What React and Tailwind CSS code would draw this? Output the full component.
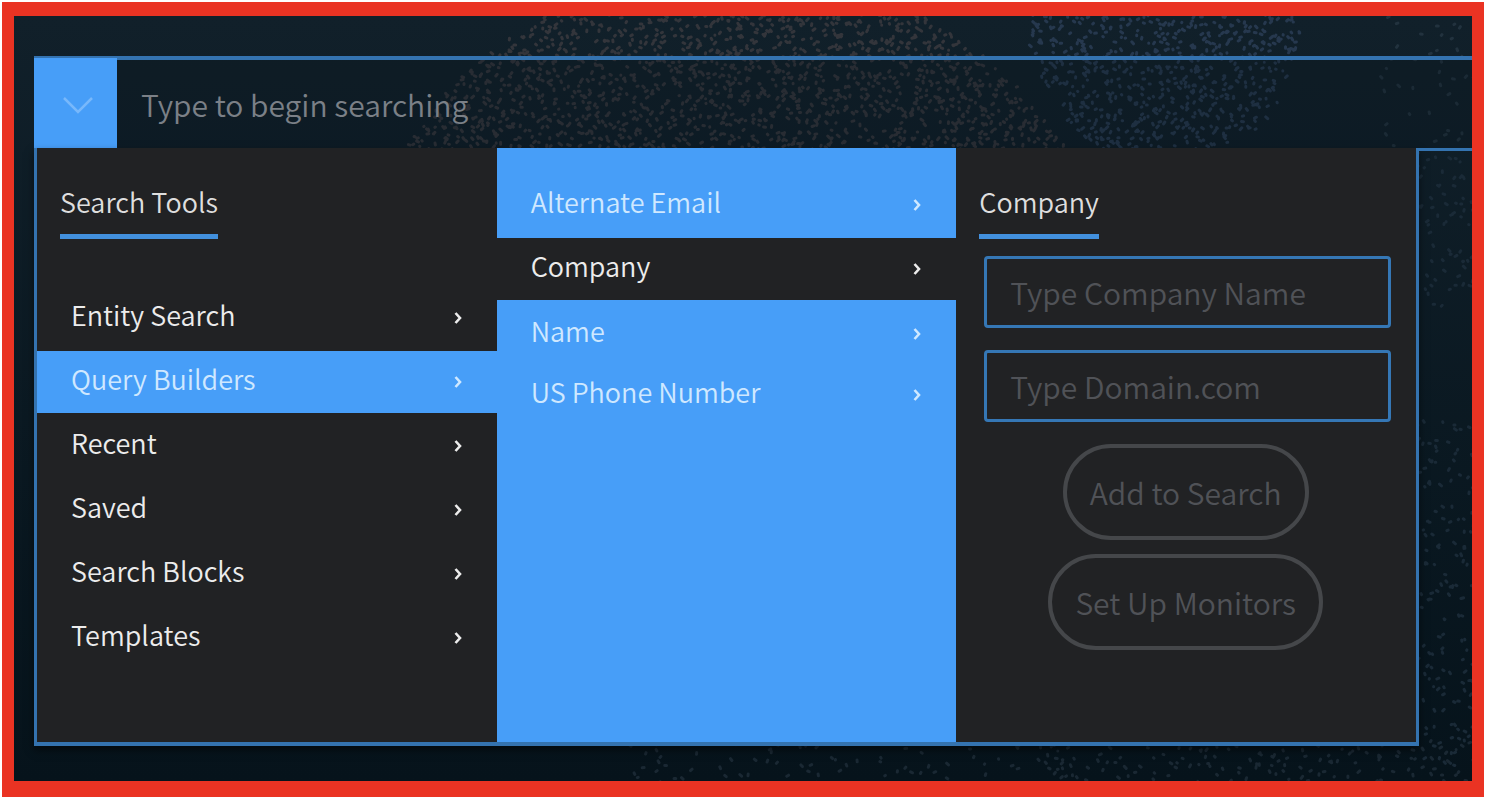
const searchTools = ["Entity Search", "Query Builders", "Recent", "Saved", "Search Blocks", "Templates"];

const queryBuilders = [
  { label: "Alternate Email", className: "h-[90px] pt-6 text-[#cfe8ff]" },
  { label: "Company", className: "h-[62px] bg-[#212224] text-[#ececec]" },
  { label: "Name", className: "h-16 pt-1 text-[#cfe8ff]" },
  { label: "US Phone Number", className: "h-[62px] text-[#cfe8ff]" },
];

function createRandom(seed) {
  let state = seed;
  return () => {
    state = (state * 1664525 + 1013904223) % 4294967296;
    return state / 4294967296;
  };
}

// Short rounded strokes scattered on a jittered grid, kept where inside() allows.
function scatter({ seed, x, y, w, h, step, density, inside }) {
  const random = createRandom(seed);
  let path = "";
  for (let row = y; row < y + h; row += step) {
    for (let col = x; col < x + w; col += step) {
      const px = col + (random() - 0.5) * step * 1.8;
      const py = row + (random() - 0.5) * step * 1.8;
      const dx = (random() - 0.5) * 4;
      const dy = (random() - 0.5) * 4;
      if (random() < density && inside(px, py)) {
        path += `M${px.toFixed(1)} ${py.toFixed(1)}l${dx.toFixed(1)} ${dy.toFixed(1)}`;
      }
    }
  }
  return path;
}

const circle = (cx, cy, r) => (x, y) => Math.hypot(x - cx, y - cy) < r;
const everywhere = () => true;

const warmDots = scatter({ seed: 7, x: 370, y: 0, w: 700, h: 140, step: 6, density: 0.72, inside: circle(721, 342, 391) });
const coolDots = scatter({ seed: 21, x: 1000, y: 0, w: 300, h: 140, step: 6, density: 0.72, inside: circle(1151, 14, 135) });
const sparseDots = scatter({ seed: 33, x: 1366, y: 0, w: 400, h: 130, step: 12, density: 0.5, inside: everywhere });
const sideDots =
  scatter({ seed: 45, x: 1408, y: 140, w: 360, h: 150, step: 9, density: 0.6, inside: everywhere }) +
  scatter({ seed: 46, x: 1408, y: 410, w: 360, h: 340, step: 9, density: 0.6, inside: everywhere });
const bottomDots =
  scatter({ seed: 57, x: 620, y: 730, w: 440, h: 40, step: 10, density: 0.4, inside: everywhere }) +
  scatter({ seed: 58, x: 1030, y: 730, w: 740, h: 40, step: 8, density: 0.6, inside: everywhere });

function Backdrop() {
  return (
    <svg
      aria-hidden="true"
      className="absolute inset-0 h-full w-full"
      viewBox="0 0 1458 765"
      preserveAspectRatio="xMinYMin slice"
      fill="none"
      strokeWidth="3"
      strokeLinecap="round"
    >
      <path d={warmDots} stroke="#33353b" />
      <path d={coolDots} stroke="#26384e" />
      <path d={sparseDots} stroke="#22323e" />
      <path d={sideDots} stroke="#1a2a37" />
      <path d={bottomDots} stroke="#1a2833" />
    </svg>
  );
}

function RightArrow() {
  return (
    <svg aria-hidden="true" className="h-3.5 w-2.5" viewBox="0 0 10 14" fill="none" stroke="currentColor" strokeWidth="2.6">
      <path d="M2.5 2 7 7 2.5 12" />
    </svg>
  );
}

function Heading({ children }) {
  return (
    <h2 className="w-fit border-b-5 border-[#4290dd] pb-3.5 text-[27px] leading-9 text-[#dedede]">{children}</h2>
  );
}

function MenuItem({ label, className }) {
  return (
    <li>
      <button type="button" className={`flex w-full items-center justify-between px-[34px] text-left text-[27px] leading-9 ${className}`}>
        <span className="pb-1.5">{label}</span>
        <RightArrow />
      </button>
    </li>
  );
}

function Field({ label }) {
  return (
    <input
      type="text"
      aria-label={label}
      placeholder={label}
      className="h-[72px] w-full rounded-sm border-3 border-[#3577b5] bg-transparent px-[23px] text-[30px] text-[#d9d9d9] outline-none placeholder:text-[#505257]"
    />
  );
}

function PillButton({ children }) {
  return (
    <button type="button" className="h-24 rounded-full border-4 border-[#45474a] px-[23px] text-[30px] text-[#505257]">
      {children}
    </button>
  );
}

export default function App() {
  return (
    <div className="bg-white px-0.5 pt-0.5 pb-[7px] font-['Noto_Sans_CJK_SC','Noto_Sans',sans-serif] font-[350]">
      <main className="relative overflow-hidden border-x-12 border-t-14 border-b-16 border-[#ea3323] bg-linear-to-b from-[#11202a] to-[#06131b] pt-10 pb-[35px] pl-5">
        <Backdrop />
        <div className="relative">
          <form className="flex h-23 border-t-4 border-[#3473b0] bg-[#06131d]/25">
            <button type="button" aria-label="Toggle search tools" className="-mt-0.5 flex w-[83px] items-center justify-center bg-[#479ef8] pt-1 pl-1">
              <svg aria-hidden="true" className="h-5 w-8" viewBox="0 0 32 20" fill="none" stroke="#78b8fb" strokeWidth="2.5">
                <path d="M2 3 16 17 30 3" />
              </svg>
            </button>
            <input
              type="search"
              aria-label="Search"
              placeholder="Type to begin searching"
              className="min-w-0 flex-1 bg-transparent px-6 text-[30px] text-[#d9d9d9] outline-none placeholder:text-[#7b8087]"
            />
          </form>
          <div className="flex">
            <div className="grid min-h-[598px] flex-1 grid-cols-3 border-x-3 border-b-4 border-[#3473b0] bg-[#212224] shadow-[0_4px_8px_#00000080]">
              <section className="pt-9">
                <div className="pl-[23px]">
                  <Heading>Search Tools</Heading>
                </div>
                <ul className="mt-12 grid gap-0.5">
                  {searchTools.map((label) => (
                    <MenuItem
                      key={label}
                      label={label}
                      className={label === "Query Builders" ? "h-[62px] bg-[#479ef8] text-[#cfe8ff]" : "h-[62px] text-[#ececec]"}
                    />
                  ))}
                </ul>
              </section>
              <ul className="bg-[#479ef8]">
                {queryBuilders.map((item) => (
                  <MenuItem key={item.label} label={item.label} className={item.className} />
                ))}
              </ul>
              <section className="pt-9 pr-[25px] pl-[23px]">
                <Heading>Company</Heading>
                <form className="mt-[17px] ml-[5px]">
                  <div className="grid gap-[22px]">
                    <Field label="Type Company Name" />
                    <Field label="Type Domain.com" />
                  </div>
                  <div className="mt-[22px] flex flex-col items-center gap-3.5 pr-1">
                    <PillButton>Add to Search</PillButton>
                    <PillButton>Set Up Monitors</PillButton>
                  </div>
                </form>
              </section>
            </div>
            <div className="w-[53px] border-t-3 border-[#3473b0]" />
          </div>
        </div>
      </main>
    </div>
  );
}
